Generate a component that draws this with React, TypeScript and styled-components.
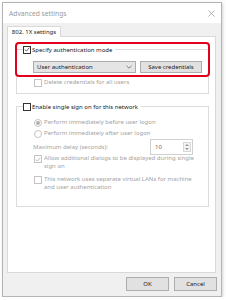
import { FC, ReactNode } from "react"
import styled, { createGlobalStyle } from "styled-components"

const GlobalStyle = createGlobalStyle`
  html, body {
    margin: 0;
    padding: 0;
    background: #ffffff;
  }
  body {
    font-family: "Noto Sans", "Liberation Sans", sans-serif;
    font-size: 6px;
    color: #1a1a1a;
  }
`

const Window = styled.div`
  box-sizing: border-box;
  width: 220px;
  height: 295px;
  margin: 2px 0 0 2px;
  border: 1px solid #b4b4b4;
  box-shadow: 1px 1px 3px rgba(0, 0, 0, 0.18);
  display: flex;
  flex-direction: column;
  background: #f0f0f0;
`

const TitleBar = styled.div`
  height: 20px;
  background: #ffffff;
  display: flex;
  align-items: center;
  justify-content: space-between;
  padding: 0 6px 0 6px;
  font-size: 6.7px;
  color: #9a9a9a;
`

const Body = styled.div`
  flex: 1;
  display: flex;
  flex-direction: column;
  padding: 3px 5px 5px 4px;
`

const TabStrip = styled.div`
  display: flex;
  height: 10px;
`

const Tab = styled.div`
  box-sizing: border-box;
  height: 11px;
  padding: 0 3px;
  width: 54px;
  background: #ffffff;
  border: 1px solid #d9d9d9;
  border-bottom: none;
  display: flex;
  align-items: center;
  justify-content: center;
  position: relative;
  z-index: 1;
`

const Panel = styled.div`
  position: relative;
  flex: 1;
  background: #ffffff;
  border: 1px solid #d9d9d9;
  padding: 8px 6px 0 8px;
  display: flex;
  flex-direction: column;
  gap: 8px;
`

const Highlight = styled.div`
  position: absolute;
  left: 7px;
  top: 5px;
  width: 195px;
  height: 35px;
  box-sizing: border-box;
  border: 2px solid #e3001b;
  border-radius: 4px;
  pointer-events: none;
`

const Group = styled.fieldset`
  margin: 0;
  padding: 0 6px;
  border: 1px solid #dcdcdc;
  min-width: 0;
`

const Legend = styled.legend`
  padding: 0 3px 0 0;
  height: 9px;
  display: flex;
  align-items: center;
  gap: 1px;
`

const GroupBody = styled.div<{ $pt: number; $pb: number }>`
  padding: ${(p) => p.$pt}px 0 ${(p) => p.$pb}px 10px;
  display: flex;
  flex-direction: column;
`

const Row = styled.div<{ $gap?: number }>`
  display: flex;
  align-items: center;
  gap: ${(p) => p.$gap ?? 4}px;
`

const OptionRow = styled.div<{ $mt?: number; $disabled?: boolean }>`
  display: flex;
  align-items: flex-start;
  gap: 2px;
  margin-left: 1px;
  margin-top: ${(p) => p.$mt ?? 0}px;
  line-height: 7.5px;
  color: ${(p) => (p.$disabled ? "#a3a3a3" : "#1a1a1a")};
`

const Label = styled.span<{ $disabled?: boolean }>`
  color: ${(p) => (p.$disabled ? "#a3a3a3" : "#1a1a1a")};
  white-space: nowrap;
`

const Wrap = styled.span`
  max-width: 150px;
`

const Box = styled.span<{ $disabled?: boolean }>`
  box-sizing: border-box;
  width: 8px;
  height: 8px;
  flex: none;
  border: 1px solid ${(p) => (p.$disabled ? "#c4c4c4" : "#333333")};
  background: #ffffff;
  display: flex;
  align-items: center;
  justify-content: center;
`

const Circle = styled(Box)`
  border-radius: 50%;
`

const Dot = styled.span`
  width: 4px;
  height: 4px;
  border-radius: 50%;
  background: #b0b0b0;
`

const Select = styled.div`
  box-sizing: border-box;
  width: 106px;
  height: 12px;
  background: #e5e5e5;
  border: 1px solid #adadad;
  display: flex;
  align-items: center;
  justify-content: space-between;
  padding: 0 3px 0 3px;
`

const Button = styled.div<{ $w: number }>`
  box-sizing: border-box;
  width: ${(p) => p.$w}px;
  height: ${(p) => (p.$w > 50 ? 12 : 14)}px;
  background: #e1e1e1;
  border: 1px solid #adadad;
  display: flex;
  align-items: center;
  justify-content: center;
`

const DelayRow = styled.div`
  display: flex;
  align-items: center;
  justify-content: space-between;
  height: 16px;
  margin-right: 9px;
  margin-top: 1px;
`

const Spin = styled.div`
  box-sizing: border-box;
  width: 43px;
  height: 16px;
  border: 1px solid #d0d0d0;
  display: flex;
  align-items: center;
  justify-content: space-between;
  padding: 0 1px 0 4px;
  color: #6a6a6a;
`

const SpinArrows = styled.div`
  box-sizing: border-box;
  width: 8px;
  height: 10px;
  border: 1px solid #d8d8d8;
  background: #f3f3f3;
  display: flex;
  flex-direction: column;
  align-items: center;
  justify-content: space-around;
`

const Footer = styled.div`
  display: flex;
  justify-content: flex-end;
  gap: 5px;
  margin: 4px -1px 0 0;
`

const Check: FC<{ checked?: boolean; disabled?: boolean }> = ({ checked, disabled }) => (
  <Box $disabled={disabled}>
    {checked && (
      <svg width="7" height="7" viewBox="0 0 7 7">
        <path d="M1 3.6 L2.8 5.4 L6.2 1.4" fill="none" stroke={disabled ? "#a8a8a8" : "#333"} strokeWidth="0.9" />
      </svg>
    )}
  </Box>
)

const Radio: FC<{ checked?: boolean }> = ({ checked }) => (
  <Circle $disabled>{checked && <Dot />}</Circle>
)

const Option: FC<{ control: ReactNode; mt?: number; disabled?: boolean; children: ReactNode }> = ({
  control,
  mt,
  disabled,
  children,
}) => (
  <OptionRow $mt={mt} $disabled={disabled}>
    {control}
    <Wrap>{children}</Wrap>
  </OptionRow>
)

const App: FC = () => {
  return (
    <>
      <GlobalStyle />
      <Window>
        <TitleBar>
          <span>Advanced settings</span>
          <svg width="7" height="7" viewBox="0 0 7 7">
            <path d="M0.5 0.5 L6.5 6.5 M6.5 0.5 L0.5 6.5" stroke="#9a9a9a" strokeWidth="0.8" />
          </svg>
        </TitleBar>
        <Body>
          <TabStrip>
            <Tab>802. 1X settings</Tab>
          </TabStrip>
          <Panel>
            <Group>
              <Legend>
                <Check checked />
                <Label>Specify authentication mode</Label>
              </Legend>
              <GroupBody $pt={7} $pb={6}>
                <Row>
                  <Select>
                    <span>User authentication</span>
                    <svg width="6" height="4" viewBox="0 0 6 4">
                      <path d="M0.5 0.8 L3 3.2 L5.5 0.8" fill="none" stroke="#555" strokeWidth="0.7" />
                    </svg>
                  </Select>
                  <Button $w={64}>Save credentials</Button>
                </Row>
                <Option mt={6} disabled control={<Check disabled />}>
                  Delete credentials for all users
                </Option>
              </GroupBody>
            </Group>
            <Group>
              <Legend>
                <Check />
                <Label>Enable single sign on for this network</Label>
              </Legend>
              <GroupBody $pt={8} $pb={15}>
                <Option disabled control={<Radio checked />}>
                  Perform immediately before user logon
                </Option>
                <Option mt={3} disabled control={<Radio />}>
                  Perform immediately after user logon
                </Option>
                <DelayRow>
                  <Label $disabled>Maximum delay (seconds):</Label>
                  <Spin>
                    <span>10</span>
                    <SpinArrows>
                      <svg width="4" height="2" viewBox="0 0 4 2">
                        <path d="M0 2 L2 0 L4 2 Z" fill="#9a9a9a" />
                      </svg>
                      <svg width="4" height="2" viewBox="0 0 4 2">
                        <path d="M0 0 L2 2 L4 0 Z" fill="#9a9a9a" />
                      </svg>
                    </SpinArrows>
                  </Spin>
                </DelayRow>
                <Option mt={0} disabled control={<Check checked disabled />}>
                  Allow additional dialogs to be displayed during single sign on
                </Option>
                <Option mt={6} disabled control={<Check disabled />}>
                  This network uses separate virtual LANs for machine and user authentication
                </Option>
              </GroupBody>
            </Group>
            <Highlight />
          </Panel>
          <Footer>
            <Button $w={43}>OK</Button>
            <Button $w={43}>Cancel</Button>
          </Footer>
        </Body>
      </Window>
    </>
  )
}

export default App
